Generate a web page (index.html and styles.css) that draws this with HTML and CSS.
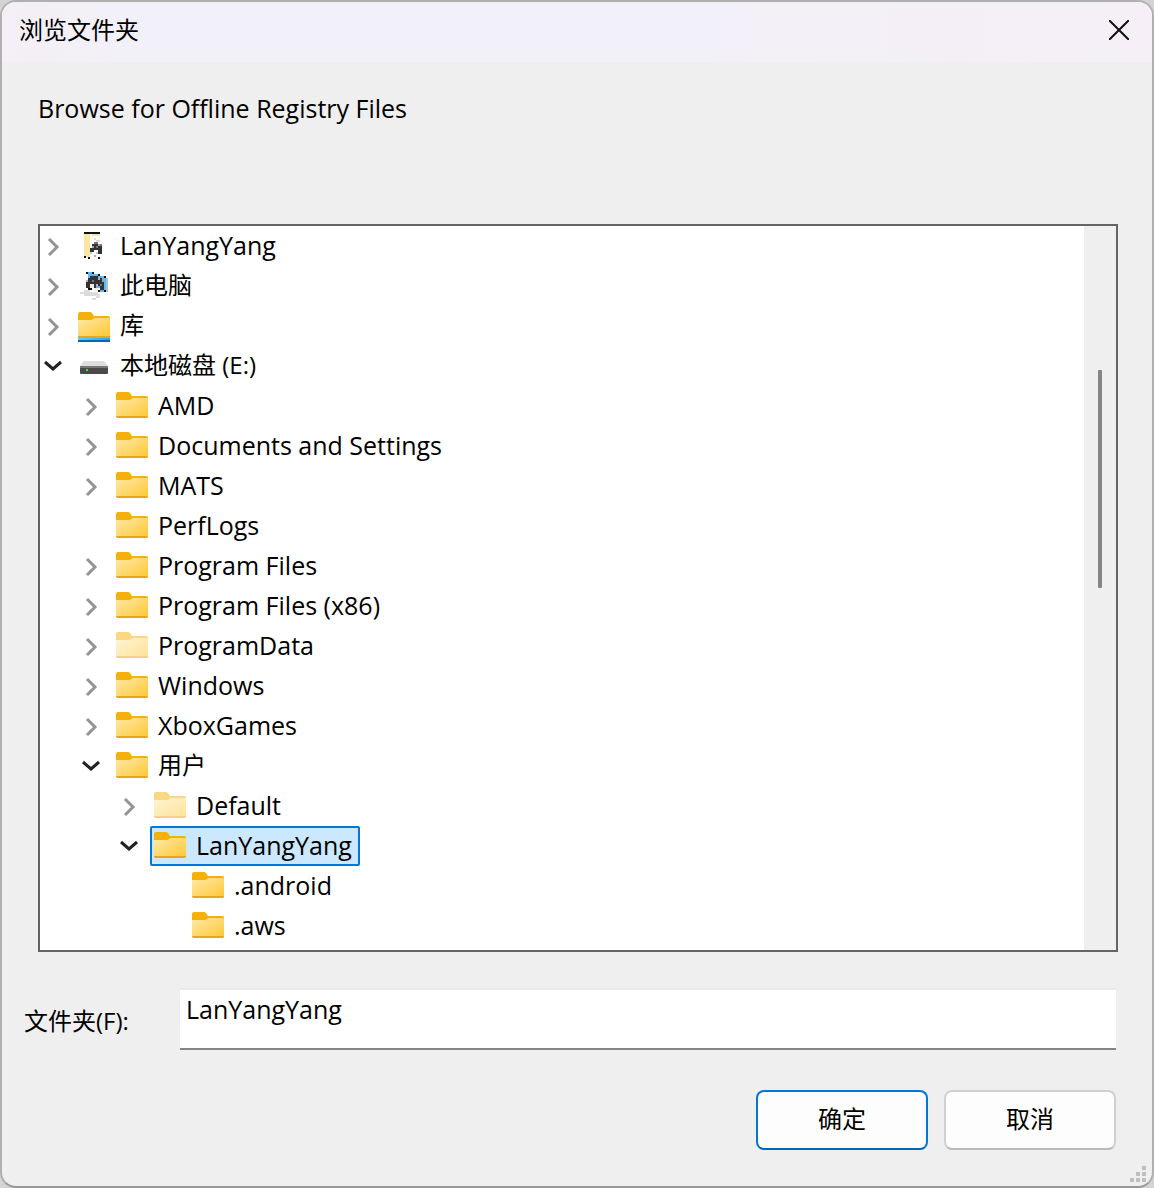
FILE: index.html
```html
<!DOCTYPE html>
<html lang="zh-CN">
<head>
    <meta charset="UTF-8">
    <meta name="viewport" content="width=device-width, initial-scale=1.0">
    <title>浏览文件夹</title>
    <link rel="stylesheet" href="styles.css">
</head>
<body>
    <!-- Shared icons -->
    <svg class="icon-defs" aria-hidden="true">
        <defs>
            <linearGradient id="folderFill" x1="0" y1="0" x2="1" y2="1">
                <stop offset="0" stop-color="#ffe9a6"/>
                <stop offset="1" stop-color="#ffc733"/>
            </linearGradient>
            <linearGradient id="libraryFill" x1="0" y1="0" x2="1" y2="0">
                <stop offset="0" stop-color="#50d5fc"/>
                <stop offset="1" stop-color="#2aa4ea"/>
            </linearGradient>
        </defs>
        <symbol id="folder" viewBox="0 0 32 32">
            <path d="M0 4q0-2 2-2h10q1 0 2 1l2 3h14q2 0 2 2v4H0z" fill="#f4b10b"/>
            <path d="M0 10h13q1 0 2-1l2-1h14q1 0 1 1v17q0 2-2 2H2q-2 0-2-2z" fill="url(#folderFill)"/>
            <path d="M0 26h32q0 2-2 2H2q-2 0-2-2z" fill="#e6a522"/>
        </symbol>
        <symbol id="library" viewBox="0 0 32 32">
            <path d="M0 4q0-2 2-2h10q1 0 2 1l2 3h14q2 0 2 2v4H0z" fill="#f4b10b"/>
            <path d="M0 10h13q1 0 2-1l2-1h14q1 0 1 1v17H0z" fill="url(#folderFill)"/>
            <path d="M0 26h32v2H0z" fill="#e6a522"/>
            <path d="M0 28h32v2H0z" fill="url(#libraryFill)"/>
            <path d="M0 30h32v2H0z" fill="#0067b8"/>
        </symbol>
        <symbol id="drive" viewBox="0 0 32 32">
            <path d="M7 11h18q1 0 2 1l3 4H2l3-4q1-1 2-1z" fill="#dcdfe2"/>
            <path d="M2 16h28v7q0 1-1 1H3q-1 0-1-1z" fill="#4a4a4a"/>
            <path d="M2 16h28v2H2z" fill="#777"/>
            <path d="M8 19h2v2H8z" fill="#2bf04b"/>
        </symbol>
        <symbol id="user" viewBox="0 0 32 32">
            <g shape-rendering="crispEdges">
                <path d="M6 3h6v24H6zM14 4h8v2h-8z" fill="#fae7a4"/>
                <path d="M6 2h16v2H6zM6 26h2v2H6zM10 27h2v2h-2zM20 27h2v2h-2z" fill="#111"/>
                <path d="M16 8h2v2h-2zM18 10h4v2h-4z" fill="#ddd"/>
                <path d="M14 14h8v2h2v8h-4v-4h-4v2h-2v2h-2v-6h2z" fill="#333"/>
                <path d="M16 12h4v2h-4zM22 14h2v2h-2zM18 16h2v2h-2z" fill="#777"/>
                <path d="M12 22h2v2h-2zM18 22h2v2h-2z" fill="#a9d4f5"/>
                <path d="M14 16h2v2h-2zM20 14h2v2h-2z" fill="#c99"/>
                <path d="M16 25h2v2h-2z" fill="#e7a866"/>
            </g>
        </symbol>
        <symbol id="computer" viewBox="0 0 32 32">
            <g shape-rendering="crispEdges">
                <path d="M10 2h6v2h6v2h6v16h-6v-4H10z" fill="#61b9f2"/>
                <path d="M28 8h2v14h-2z" fill="#b5bdc5"/>
                <path d="M12 6h8v2h4v4h2v8h-4v-4h-4v2h-2v-4h-4v4H8v-8h2V8h2z" fill="#333"/>
                <path d="M12 14h4v4h-4zM16 18h4v3h-4z" fill="#eee"/>
                <path d="M8 2h2v2H8zM14 2h2v2h-2zM20 4h2v2h-2zM26 6h2v2h-2zM20 20h2v2h-2zM26 20h2v2h-2zM10 18h4v2h-4z" fill="#111"/>
                <path d="M8 10h2v2H8zM20 8h2v2h-2zM18 14h2v2h-2z" fill="#dba4a8"/>
                <path d="M14 10h2v2h-2zM22 14h2v2h-2z" fill="#777"/>
                <path d="M6 20h6v2h8v2h2v4h-4v-2H6v-2H2v-2h4zM14 28h4v2h-4z" fill="#dcdcdc"/>
            </g>
        </symbol>
        <symbol id="closed" viewBox="0 0 16 20">
            <path d="M4 3l8 8-8 8" fill="none" stroke="#949494" stroke-width="3"/>
        </symbol>
        <symbol id="opened" viewBox="0 0 20 16">
            <path d="M2 4l8 7 8-7" fill="none" stroke="#222" stroke-width="3"/>
        </symbol>
    </svg>

    <div class="dialog" role="dialog" aria-labelledby="title">
        <div class="title-bar">
            <h1 id="title" class="title">浏览文件夹</h1>
            <button type="button" class="close" aria-label="关闭">
                <svg width="20" height="20" viewBox="0 0 20 20"><path d="M0 0l20 20M20 0L0 20" stroke="#111" stroke-width="2"/></svg>
            </button>
        </div>

        <p class="message">Browse for Offline Registry Files</p>

        <div class="tree-box">
            <ul class="tree">
                <li>
                    <div class="row">
                        <button type="button" class="toggle" aria-label="展开"><svg class="closed"><use href="#closed"/></svg></button>
                        <span class="item"><svg class="icon"><use href="#user"/></svg>LanYangYang</span>
                    </div>
                </li>
                <li>
                    <div class="row">
                        <button type="button" class="toggle" aria-label="展开"><svg class="closed"><use href="#closed"/></svg></button>
                        <span class="item zh"><svg class="icon"><use href="#computer"/></svg>此电脑</span>
                    </div>
                </li>
                <li>
                    <div class="row">
                        <button type="button" class="toggle" aria-label="展开"><svg class="closed"><use href="#closed"/></svg></button>
                        <span class="item zh"><svg class="icon"><use href="#library"/></svg>库</span>
                    </div>
                </li>
                <li>
                    <div class="row">
                        <button type="button" class="toggle" aria-label="折叠"><svg class="opened"><use href="#opened"/></svg></button>
                        <span class="item zh"><svg class="icon"><use href="#drive"/></svg>本地磁盘 (E:)</span>
                    </div>
                    <ul>
                        <li>
                            <div class="row">
                                <button type="button" class="toggle" aria-label="展开"><svg class="closed"><use href="#closed"/></svg></button>
                                <span class="item"><svg class="icon"><use href="#folder"/></svg>AMD</span>
                            </div>
                        </li>
                        <li>
                            <div class="row">
                                <button type="button" class="toggle" aria-label="展开"><svg class="closed"><use href="#closed"/></svg></button>
                                <span class="item"><svg class="icon"><use href="#folder"/></svg>Documents and Settings</span>
                            </div>
                        </li>
                        <li>
                            <div class="row">
                                <button type="button" class="toggle" aria-label="展开"><svg class="closed"><use href="#closed"/></svg></button>
                                <span class="item"><svg class="icon"><use href="#folder"/></svg>MATS</span>
                            </div>
                        </li>
                        <li>
                            <div class="row leaf">
                                <span class="item"><svg class="icon"><use href="#folder"/></svg>PerfLogs</span>
                            </div>
                        </li>
                        <li>
                            <div class="row">
                                <button type="button" class="toggle" aria-label="展开"><svg class="closed"><use href="#closed"/></svg></button>
                                <span class="item"><svg class="icon"><use href="#folder"/></svg>Program Files</span>
                            </div>
                        </li>
                        <li>
                            <div class="row">
                                <button type="button" class="toggle" aria-label="展开"><svg class="closed"><use href="#closed"/></svg></button>
                                <span class="item"><svg class="icon"><use href="#folder"/></svg>Program Files (x86)</span>
                            </div>
                        </li>
                        <li>
                            <div class="row">
                                <button type="button" class="toggle" aria-label="展开"><svg class="closed"><use href="#closed"/></svg></button>
                                <span class="item"><svg class="icon hidden-folder"><use href="#folder"/></svg>ProgramData</span>
                            </div>
                        </li>
                        <li>
                            <div class="row">
                                <button type="button" class="toggle" aria-label="展开"><svg class="closed"><use href="#closed"/></svg></button>
                                <span class="item"><svg class="icon"><use href="#folder"/></svg>Windows</span>
                            </div>
                        </li>
                        <li>
                            <div class="row">
                                <button type="button" class="toggle" aria-label="展开"><svg class="closed"><use href="#closed"/></svg></button>
                                <span class="item"><svg class="icon"><use href="#folder"/></svg>XboxGames</span>
                            </div>
                        </li>
                        <li>
                            <div class="row">
                                <button type="button" class="toggle" aria-label="折叠"><svg class="opened"><use href="#opened"/></svg></button>
                                <span class="item zh"><svg class="icon"><use href="#folder"/></svg>用户</span>
                            </div>
                            <ul>
                                <li>
                                    <div class="row">
                                        <button type="button" class="toggle" aria-label="展开"><svg class="closed"><use href="#closed"/></svg></button>
                                        <span class="item"><svg class="icon hidden-folder"><use href="#folder"/></svg>Default</span>
                                    </div>
                                </li>
                                <li>
                                    <div class="row">
                                        <button type="button" class="toggle" aria-label="折叠"><svg class="opened"><use href="#opened"/></svg></button>
                                        <span class="item selected"><svg class="icon"><use href="#folder"/></svg>LanYangYang</span>
                                    </div>
                                    <ul>
                                        <li>
                                            <div class="row leaf">
                                                <span class="item"><svg class="icon"><use href="#folder"/></svg>.android</span>
                                            </div>
                                        </li>
                                        <li>
                                            <div class="row leaf">
                                                <span class="item"><svg class="icon"><use href="#folder"/></svg>.aws</span>
                                            </div>
                                        </li>
                                    </ul>
                                </li>
                            </ul>
                        </li>
                    </ul>
                </li>
            </ul>
            <div class="scrollbar">
                <div class="thumb"></div>
            </div>
        </div>

        <form class="form">
            <div class="field">
                <label for="folderName" class="zh">文件夹(F):</label>
                <input type="text" id="folderName" name="folderName" value="LanYangYang">
            </div>
            <div class="button-container">
                <button type="button" class="button primary zh">确定</button>
                <button type="button" class="button zh">取消</button>
            </div>
        </form>

        <svg class="grip" width="16" height="16" viewBox="0 0 16 16" aria-hidden="true">
            <path d="M12 0h4v4h-4zM6 6h4v4H6zM12 6h4v4h-4zM0 12h4v4H0zM6 12h4v4H6zM12 12h4v4h-4z" fill="#bfbfbf"/>
        </svg>
    </div>
</body>
</html>
```
FILE: styles.css
```css
* {
    box-sizing: border-box;
}
body {
    margin: 0;
    min-height: 100vh;
    display: flex;
    background: #d4d4d4;
    color: #000;
    font-family: "Open Sans", "Noto Sans CJK SC", sans-serif;
    font-size: 25px;
    line-height: 36px;
}
button, input {
    font: inherit;
    color: inherit;
}
ul {
    list-style: none;
    margin: 0;
    padding: 0;
}
.icon-defs {
    position: absolute;
    width: 0;
    height: 0;
}
.zh {
    font-size: 24px; /* Chinese labels run slightly smaller than Latin ones */
}
.dialog {
    position: relative; /* Holds the resize grip */
    flex: 1;
    min-width: 0;
    background: #efefef;
    border: 2px solid #b0b0b0;
    border-bottom-color: #989898;
    border-radius: 16px;
    overflow: hidden;
}
.title-bar {
    display: flex;
    align-items: center;
    justify-content: space-between;
    height: 60px;
    padding: 0 17px 4px;
    background: linear-gradient(to right, #f5eff7, #f2f0f8 10%, #f2f0f8 60%, #f6eff7);
}
.title {
    margin: 0;
    font-size: 24px;
    font-weight: normal;
}
.close {
    display: flex;
    padding: 6px;
    background: none;
    border: none;
}
.message {
    margin: 28px 36px 98px;
}

/* Folder tree */
.tree-box {
    display: flex;
    margin: 0 34px 0 36px;
    border: 2px solid #646464;
    background: #fff;
}
.tree {
    flex: 1;
    padding-bottom: 4px;
}
.tree ul {
    padding-left: 38px;
}
.row {
    display: flex;
    align-items: center;
    height: 40px;
}
.leaf {
    padding-left: 34px;
}
.toggle {
    display: flex;
    justify-content: center;
    width: 26px;
    margin-right: 8px;
    padding: 0;
    background: none;
    border: none;
}
.closed {
    width: 16px;
    height: 20px;
}
.opened {
    width: 20px;
    height: 16px;
}
.item {
    display: flex;
    align-items: flex-start;
    gap: 10px;
    height: 40px;
    padding: 0 6px 0 2px;
    border: 2px solid transparent;
    border-radius: 2px;
    line-height: 34px;
    white-space: nowrap;
}
.selected {
    background: #cce8ff;
    border-color: #0078d7;
}
.icon {
    width: 32px;
    height: 32px;
    margin-top: 2px;
}
.hidden-folder {
    opacity: 0.5;
}
.scrollbar {
    width: 32px;
    padding: 144px 14px 0;
    background: #efefef;
}
.thumb {
    height: 218px;
    background: #858585;
    border-radius: 1px;
}

/* Folder name and buttons */
.form {
    padding: 36px 36px 36px 22px;
}
.field {
    display: flex;
    align-items: center;
}
.field label {
    width: 156px;
    padding-top: 4px;
}
.field input {
    flex: 1;
    min-width: 0;
    height: 62px;
    padding: 0 6px 20px;
    background: #fff;
    border: none;
    border-top: 2px solid #eaeaea;
    border-bottom: 2px solid #858585;
    outline: none;
}
.button-container {
    display: flex;
    justify-content: flex-end;
    gap: 16px;
    margin-top: 40px;
}
.button {
    width: 172px;
    height: 60px;
    padding: 0 0 2px;
    background: #fdfdfd;
    border: 2px solid #d0d0d0;
    border-bottom-color: #bababa;
    border-radius: 8px;
}
.primary {
    border-color: #0078d4;
    border-bottom-color: #0067b8;
}
.grip {
    position: absolute;
    right: 6px;
    bottom: 4px;
}
```
